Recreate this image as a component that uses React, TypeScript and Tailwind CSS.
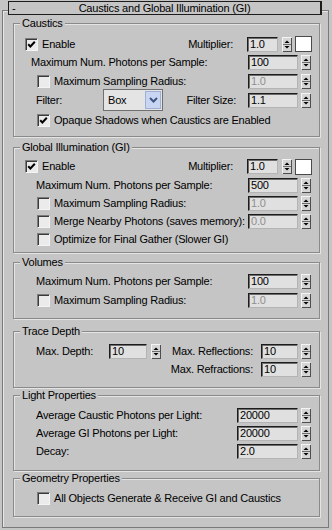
import React from "react";

function Spinner({ className = "" }: { className?: string }) {
  return (
    <svg width="10" height="15" viewBox="0 0 10 15" shapeRendering="crispEdges" className={`block shrink-0 ${className}`}>
      <rect x="0" y="0" width="10" height="15" fill="#d6d6d6" />
      <path d="M0.5 14V0.5H9" stroke="#f4f4f4" fill="none" />
      <path d="M0.5 14.5H9.5V0.5" stroke="#4e4e4e" fill="none" />
      <path d="M1 7.5H9" stroke="#6e6e6e" />
      <path d="M2.5 6H7.5L5 3.5Z" fill="#000" shapeRendering="auto" />
      <path d="M2.5 9H7.5L5 11.5Z" fill="#000" shapeRendering="auto" />
    </svg>
  );
}

function Check({ on = false }: { on?: boolean }) {
  return (
    <span className="flex h-[13px] w-[13px] shrink-0 items-center justify-center border border-b-[#f4f4f4] border-l-[#7c7c7c] border-r-[#f4f4f4] border-t-[#7c7c7c] bg-[#ebebeb] shadow-[inset_1px_1px_0_#3a3a3a]">
      {on && (
        <svg width="9" height="9" viewBox="0 0 9 9">
          <path d="M1.2 4.2L3.4 6.5L7.8 1.8" stroke="#000" strokeWidth="2" fill="none" />
        </svg>
      )}
    </span>
  );
}

function Field({ v, w, dis = false }: { v: string; w: string; dis?: boolean }) {
  return (
    <div
      className={`${w} h-[15px] shrink-0 border border-b-[#b4b4b4] border-l-[#1c1c1c] border-r-[#b4b4b4] border-t-[#1c1c1c] bg-[#e0e0e0] pl-[2px] leading-[13px] shadow-[inset_1px_1px_0_#6c6c6c] ${
        dis ? "text-[#8f8f8f]" : "text-black"
      }`}
    >
      {v}
    </div>
  );
}

function Swatch() {
  return <div className="ml-[3px] h-[16px] w-[17px] shrink-0 border border-[#4a4a4a] bg-white" />;
}

function Group({ title, cls, children }: { title: string; cls: string; children: React.ReactNode }) {
  return (
    <div className={`${cls} border border-[#8a8a8a] shadow-[1px_1px_0_#e4e4e4,inset_1px_1px_0_#e4e4e4]`}>
      <div className="-mt-[7px] ml-[6px] w-fit bg-[#c5c5c5] px-[2px] leading-[13px]">{title}</div>
      {children}
    </div>
  );
}

export default function App() {
  return (
    <div className="h-[530px] w-[332px] overflow-hidden bg-[#c5c5c5] pt-[10px] font-['Liberation_Sans',Arial,sans-serif] text-[11px] tracking-[-0.2px] text-black">
      <div className="ml-[2px] w-[327px] border border-[#7a7a7a] pb-[10px] pl-[10px] pr-[8px] shadow-[inset_1px_1px_0_#e6e6e6]">
        {/* rollout title */}
        <div className="-ml-[5px] -mt-[10px] flex h-[14px] w-[314px] items-center border border-r-2 border-[#1c1c1c] bg-[#c5c5c5] leading-[12px]">
          <span className="w-[12px] pl-[3px]">-</span>
          <span className="flex-1 pr-[12px] text-center">Caustics and Global Illumination (GI)</span>
        </div>

        <Group title="Caustics" cls="mt-[8px] h-[114px]">
          <div className="mt-[6px] flex h-[16px] items-center pl-[11px] pr-[7px]">
            <Check on />
            <span className="ml-[4px]">Enable</span>
            <span className="ml-auto mr-[14px]">Multiplier:</span>
            <Field v="1.0" w="w-[31px]" />
            <Spinner className="ml-[4px]" />
            <Swatch />
          </div>
          <div className="mt-[3px] flex h-[15px] items-center pl-[17px] pr-[8px]">
            <span>Maximum Num. Photons per Sample:</span>
            <span className="ml-auto" />
            <Field v="100" w="w-[50px]" />
            <Spinner className="ml-[3px]" />
          </div>
          <div className="mt-[4px] flex h-[15px] items-center pl-[23px] pr-[8px]">
            <Check />
            <span className="ml-[4px]">Maximum Sampling Radius:</span>
            <span className="ml-auto" />
            <Field v="1.0" w="w-[50px]" dis />
            <Spinner className="ml-[3px]" />
          </div>
          <div className="flex h-[22px] items-center pr-[8px]">
            <span className="w-[89px] shrink-0 pl-[22px]">Filter:</span>
            <div className="flex h-[22px] w-[60px] items-center border border-[#707070] bg-[#e4e4e4] p-[1px]">
              <span className="flex-1 pl-[3px]">Box</span>
              <span className="flex h-[18px] w-[16px] items-center justify-center border border-[#9fb0d4] bg-[#c8d5f3]">
                <svg width="9" height="6" viewBox="0 0 9 6">
                  <path d="M1 1L4.5 4.5L8 1" stroke="#40557e" strokeWidth="2" fill="none" />
                </svg>
              </span>
            </div>
            <span className="ml-auto mr-[12px]">Filter Size:</span>
            <Field v="1.1" w="w-[50px]" />
            <Spinner className="ml-[3px]" />
          </div>
          <div className="mt-[2px] flex h-[15px] items-center pl-[23px]">
            <Check on />
            <span className="ml-[4px]">Opaque Shadows when Caustics are Enabled</span>
          </div>
        </Group>

        <Group title="Global Illumination (GI)" cls="mt-[10px] h-[106px]">
          <div className="mt-[5px] flex h-[15px] items-center pl-[11px] pr-[7px]">
            <Check on />
            <span className="ml-[4px]">Enable</span>
            <span className="ml-auto mr-[14px]">Multiplier:</span>
            <Field v="1.0" w="w-[31px]" />
            <Spinner className="ml-[4px]" />
            <Swatch />
          </div>
          <div className="mt-[4px] flex h-[15px] items-center pl-[22px] pr-[8px]">
            <span>Maximum Num. Photons per Sample:</span>
            <span className="ml-auto" />
            <Field v="500" w="w-[50px]" />
            <Spinner className="ml-[3px]" />
          </div>
          <div className="mt-[3px] flex h-[15px] items-center pl-[23px] pr-[8px]">
            <Check />
            <span className="ml-[4px]">Maximum Sampling Radius:</span>
            <span className="ml-auto" />
            <Field v="1.0" w="w-[50px]" dis />
            <Spinner className="ml-[3px]" />
          </div>
          <div className="mt-[3px] flex h-[15px] items-center pl-[23px] pr-[8px]">
            <Check />
            <span className="ml-[4px] whitespace-nowrap">Merge Nearby Photons (saves memory):</span>
            <span className="ml-auto" />
            <Field v="0.0" w="w-[50px]" dis />
            <Spinner className="ml-[3px]" />
          </div>
          <div className="mt-[3px] flex h-[15px] items-center pl-[23px]">
            <Check />
            <span className="ml-[4px]">Optimize for Final Gather (Slower GI)</span>
          </div>
        </Group>

        <Group title="Volumes" cls="mt-[9px] h-[57px]">
          <div className="mt-[5px] flex h-[15px] items-center pl-[22px] pr-[8px]">
            <span>Maximum Num. Photons per Sample:</span>
            <span className="ml-auto" />
            <Field v="100" w="w-[50px]" />
            <Spinner className="ml-[3px]" />
          </div>
          <div className="mt-[4px] flex h-[15px] items-center pl-[23px] pr-[8px]">
            <Check />
            <span className="ml-[4px]">Maximum Sampling Radius:</span>
            <span className="ml-auto" />
            <Field v="1.0" w="w-[50px]" dis />
            <Spinner className="ml-[3px]" />
          </div>
        </Group>

        <Group title="Trace Depth" cls="mt-[12px] h-[57px]">
          <div className="mt-[6px] flex h-[15px] items-center pr-[8px]">
            <span className="w-[95px] shrink-0 pl-[22px]">Max. Depth:</span>
            <Field v="10" w="w-[38px]" />
            <Spinner className="ml-[4px]" />
            <span className="ml-auto mr-[8px]">Max. Reflections:</span>
            <Field v="10" w="w-[37px]" />
            <Spinner className="ml-[3px]" />
          </div>
          <div className="mt-[3px] flex h-[15px] items-center pr-[8px]">
            <span className="ml-auto mr-[8px]">Max. Refractions:</span>
            <Field v="10" w="w-[37px]" />
            <Spinner className="ml-[3px]" />
          </div>
        </Group>

        <Group title="Light Properties" cls="mt-[7px] h-[76px]">
          <div className="mt-[6px] flex h-[15px] items-center pl-[22px] pr-[8px]">
            <span>Average Caustic Photons per Light:</span>
            <span className="ml-auto" />
            <Field v="20000" w="w-[61px]" />
            <Spinner className="ml-[3px]" />
          </div>
          <div className="mt-[3px] flex h-[15px] items-center pl-[22px] pr-[8px]">
            <span>Average GI Photons per Light:</span>
            <span className="ml-auto" />
            <Field v="20000" w="w-[61px]" />
            <Spinner className="ml-[3px]" />
          </div>
          <div className="mt-[3px] flex h-[15px] items-center pl-[22px] pr-[8px]">
            <span>Decay:</span>
            <span className="ml-auto" />
            <Field v="2.0" w="w-[61px]" />
            <Spinner className="ml-[3px]" />
          </div>
        </Group>

        <Group title="Geometry Properties" cls="mt-[7px] h-[39px]">
          <div className="mt-[6px] flex h-[15px] items-center pl-[23px]">
            <Check />
            <span className="ml-[4px]">All Objects Generate &amp; Receive GI and Caustics</span>
          </div>
        </Group>
      </div>
    </div>
  );
}
